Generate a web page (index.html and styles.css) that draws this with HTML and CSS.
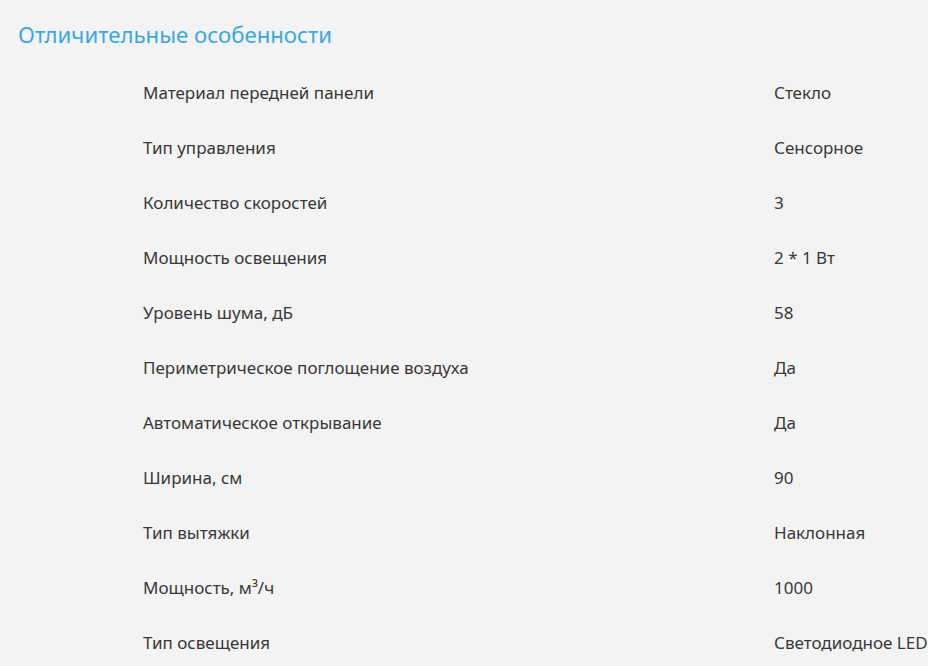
FILE: index.html
```html
<!DOCTYPE html>
<html lang="ru">
<head>
<meta charset="utf-8">
<link rel="stylesheet" href="styles.css">
</head>
<body>
<section class="features">
  <h2 class="features__title">Отличительные особенности</h2>
  <div class="features__list">
    <div class="row"><span class="row__label">Материал передней панели</span><span class="row__value">Стекло</span></div>
    <div class="row"><span class="row__label">Тип управления</span><span class="row__value">Сенсорное</span></div>
    <div class="row"><span class="row__label">Количество скоростей</span><span class="row__value">3</span></div>
    <div class="row"><span class="row__label">Мощность освещения</span><span class="row__value">2 * 1 Вт</span></div>
    <div class="row"><span class="row__label">Уровень шума, дБ</span><span class="row__value">58</span></div>
    <div class="row"><span class="row__label">Периметрическое поглощение воздуха</span><span class="row__value">Да</span></div>
    <div class="row"><span class="row__label">Автоматическое открывание</span><span class="row__value">Да</span></div>
    <div class="row"><span class="row__label">Ширина, см</span><span class="row__value">90</span></div>
    <div class="row"><span class="row__label">Тип вытяжки</span><span class="row__value">Наклонная</span></div>
    <div class="row"><span class="row__label">Мощность, м³/ч</span><span class="row__value">1000</span></div>
    <div class="row"><span class="row__label">Тип освещения</span><span class="row__value">Светодиодное LED</span></div>
  </div>
</section>
</body>
</html>
```
FILE: styles.css
```css
html, body {
  margin: 0;
  padding: 0;
  background: #f3f3f3;
}
body {
  font-family: "Noto Sans", "DejaVu Sans", sans-serif;
  color: #383838;
  overflow: hidden;
}
.features {
  padding: 20px 0 0 18px;
}
.features__title {
  margin: 0;
  font-size: 22.2px;
  font-weight: 400;
  color: #3aa8e0;
  line-height: 30px;
}
.features__list {
  display: flex;
  flex-direction: column;
  padding-top: 33px;
}
.row {
  display: grid;
  grid-template-columns: 631px 1fr;
  padding-left: 125px;
  height: 55px;
  font-size: 17px;
  line-height: 20px;
  white-space: nowrap;
}
.row__label, .row__value {
  display: block;
}
```
